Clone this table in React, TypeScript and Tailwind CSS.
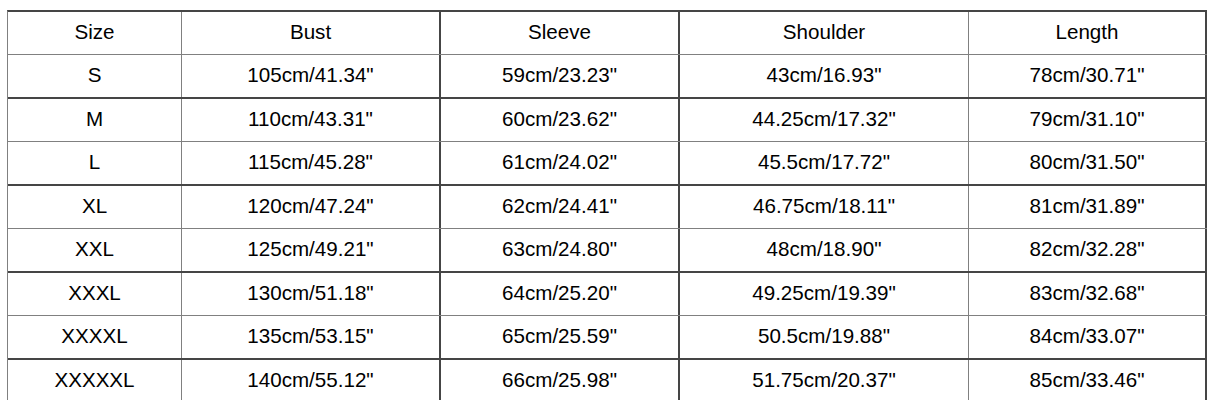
import React from "react";

const header = ["Size", "Bust", "Sleeve", "Shoulder", "Length"];
const rows: string[][] = [
  ["S", "105cm/41.34\"", "59cm/23.23\"", "43cm/16.93\"", "78cm/30.71\""],
  ["M", "110cm/43.31\"", "60cm/23.62\"", "44.25cm/17.32\"", "79cm/31.10\""],
  ["L", "115cm/45.28\"", "61cm/24.02\"", "45.5cm/17.72\"", "80cm/31.50\""],
  ["XL", "120cm/47.24\"", "62cm/24.41\"", "46.75cm/18.11\"", "81cm/31.89\""],
  ["XXL", "125cm/49.21\"", "63cm/24.80\"", "48cm/18.90\"", "82cm/32.28\""],
  ["XXXL", "130cm/51.18\"", "64cm/25.20\"", "49.25cm/19.39\"", "83cm/32.68\""],
  ["XXXXL", "135cm/53.15\"", "65cm/25.59\"", "50.5cm/19.88\"", "84cm/33.07\""],
  ["XXXXXL", "140cm/55.12\"", "66cm/25.98\"", "51.75cm/20.37\"", "85cm/33.46\""],
];

// column widths (border-box, include right border)
const colW = ["w-[174px]", "w-[259px]", "w-[239px]", "w-[289px]", "w-[238px]"];
const colB = [
  "border-r border-r-[#808080]",
  "border-r-2 border-r-[#454545]",
  "border-r-2 border-r-[#454545]",
  "border-r border-r-[#808080]",
  "border-r-2 border-r-[#454545]",
];

function Row({ cells, idx }: { cells: string[]; idx: number }) {
  const thin = idx % 2 === 0;
  const bottom = thin
    ? "border-b border-b-[#808080]"
    : "border-b-2 border-b-[#454545]";
  return (
    <div className={`flex ${bottom}`}>
      {cells.map((c, i) => (
        <div
          key={i}
          className={`${colW[i]} ${colB[i]} h-[42px] pb-[2px] flex items-center justify-center text-[20.6px] text-black shrink-0`}
        >
          {c}
        </div>
      ))}
    </div>
  );
}

export default function App() {
  return (
    <div
      className="w-[1213px] h-[400px] bg-white overflow-hidden pt-[10px] pl-[7px]"
      style={{ fontFamily: '"Liberation Sans", Arial, sans-serif' }}
    >
      <div className="inline-flex flex-col border-t-2 border-t-[#454545] border-l border-l-[#808080]">
        <Row cells={header} idx={0} />
        {rows.map((r, i) => (
          <Row key={i} cells={r} idx={i + 1} />
        ))}
      </div>
    </div>
  );
}
